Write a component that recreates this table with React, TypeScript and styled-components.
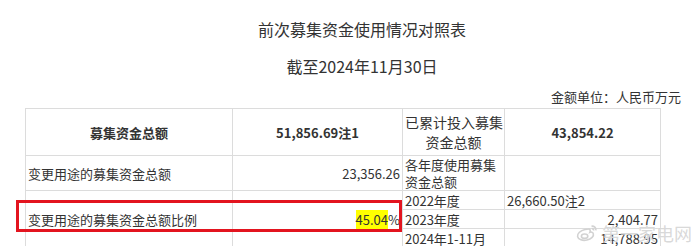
import React from 'react';
import styled, { createGlobalStyle } from 'styled-components';

const GlobalStyle = createGlobalStyle`
  html, body {
    margin: 0;
    padding: 0;
    background: #fff;
  }
  body {
    font-family: "Noto Sans CJK SC", "Noto Sans", sans-serif;
    color: #333;
  }
`;

const colors = {
  text: '#333',
  grid: '#dcdcdc',
  red: '#e3141f',
  highlight: '#ffff00',
  mark: '#d2d2d2',
};

type UsageRow = { label: string; value: string; align: 'left' | 'right' };

const usageRows: UsageRow[] = [
  { label: '2022年度', value: '26,660.50注2', align: 'left' },
  { label: '2023年度', value: '2,404.77', align: 'right' },
  { label: '2024年1-11月', value: '14,788.95', align: 'right' },
];

const WeiboMark: React.FC = () => (
  <svg width="24" height="18" viewBox="0 0 24 18" fill="none" stroke={colors.mark} strokeWidth="1.6">
    <path d="M10 5.5C5.5 6.5 2 9.5 2.6 12.6c.6 3 5 4.4 9.4 3.4 4.4-1 7.2-3.8 6.3-6.4-.5-1.6-2.3-1.8-3.4-1.3 .8-2 .2-3.4-1.6-3.3-1.1 0-2.3.3-3.3.5z" />
    <ellipse cx="9.6" cy="12.2" rx="3.2" ry="2.2" />
    <path d="M16.5 2.2c2.6-.4 4.8 1.6 4.4 4.2" />
    <path d="M16.8 4.6c1.2-.1 2 .8 1.9 1.9" />
  </svg>
);

const App: React.FC = () => {
  return (
    <Page>
      <GlobalStyle />
      <Heading>前次募集资金使用情况对照表</Heading>
      <SubHeading>截至2024年11月30日</SubHeading>
      <Unit>金额单位：人民币万元</Unit>
      <TableWrap>
        <Table>
          <colgroup>
            <col style={{ width: 207 }} />
            <col style={{ width: 170 }} />
            <col style={{ width: 102 }} />
            <col style={{ width: 156 }} />
          </colgroup>
          <tbody>
            <HeadRow>
              <Cell $bold $align="center">募集资金总额</Cell>
              <Cell $bold $align="center">51,856.69注1</Cell>
              <Cell $align="center" $tall>已累计投入募集<br />资金总额</Cell>
              <Cell $bold $align="center">43,854.22</Cell>
            </HeadRow>
            <MidRow>
              <Cell>变更用途的募集资金总额</Cell>
              <Cell $align="right">23,356.26</Cell>
              <Cell>各年度使用募集<br />资金总额</Cell>
              <Cell />
            </MidRow>
            {usageRows.map((row, i) => (
              <SlimRow key={row.label}>
                {i === 0 && (
                  <>
                    <Cell rowSpan={3}>变更用途的募集资金总额比例</Cell>
                    <Cell rowSpan={3} $align="right">
                      <Mark>45.04</Mark>%
                    </Cell>
                  </>
                )}
                <Cell>{row.label}</Cell>
                <Cell $align={row.align}>{row.value}</Cell>
              </SlimRow>
            ))}
          </tbody>
        </Table>
        <RedFrame />
        <Watermark>
          <WeiboMark />
          <span>第一家电网</span>
        </Watermark>
      </TableWrap>
    </Page>
  );
};

const Page = styled.div`
  width: 700px;
  height: 246px;
  overflow: hidden;
  background: #fff;
`;

const Heading = styled.h1`
  margin: 0;
  padding: 19px 0 0 24px;
  font-size: 16px;
  line-height: 20px;
  font-weight: normal;
  text-align: center;
  color: ${colors.text};
`;

const SubHeading = styled(Heading)`
  padding-top: 17px;
`;

const Unit = styled.div`
  margin-top: 13px;
  padding-right: 19px;
  font-size: 13px;
  line-height: 16px;
  text-align: right;
`;

const TableWrap = styled.div`
  position: relative;
  margin: 3px 0 0 25px;
  width: 636px;
`;

const Table = styled.table`
  width: 636px;
  table-layout: fixed;
  border-collapse: collapse;
  font-size: 13px;
  color: ${colors.text};
`;

const HeadRow = styled.tr`
  height: 47px;
`;

const MidRow = styled.tr`
  height: 34px;
`;

const SlimRow = styled.tr`
  height: 19px;
`;

const Cell = styled.td<{ $bold?: boolean; $align?: 'left' | 'right' | 'center'; $tall?: boolean }>`
  border: 1px solid ${colors.grid};
  padding: 0 2px;
  line-height: ${(p) => (p.$tall ? '20px' : '17px')};
  font-size: ${(p) => (p.$tall ? '14px' : '13px')};
  font-weight: ${(p) => (p.$bold ? 700 : 400)};
  text-align: ${(p) => p.$align || 'left'};
  vertical-align: middle;
  white-space: nowrap;
  overflow: hidden;
`;

const Mark = styled.span`
  background: ${colors.highlight};
`;

const RedFrame = styled.div`
  position: absolute;
  left: -9px;
  top: 92px;
  width: 380px;
  height: 26px;
  border: 3px solid ${colors.red};
  pointer-events: none;
`;

const Watermark = styled.div`
  position: absolute;
  left: 550px;
  top: 114px;
  display: flex;
  align-items: center;
  gap: 3px;
  white-space: nowrap;
  font-size: 18px;
  line-height: 22px;
  color: rgba(200, 200, 200, 0.7);
  text-shadow: 0 0 1px #fff;
  pointer-events: none;
`;

export default App;
